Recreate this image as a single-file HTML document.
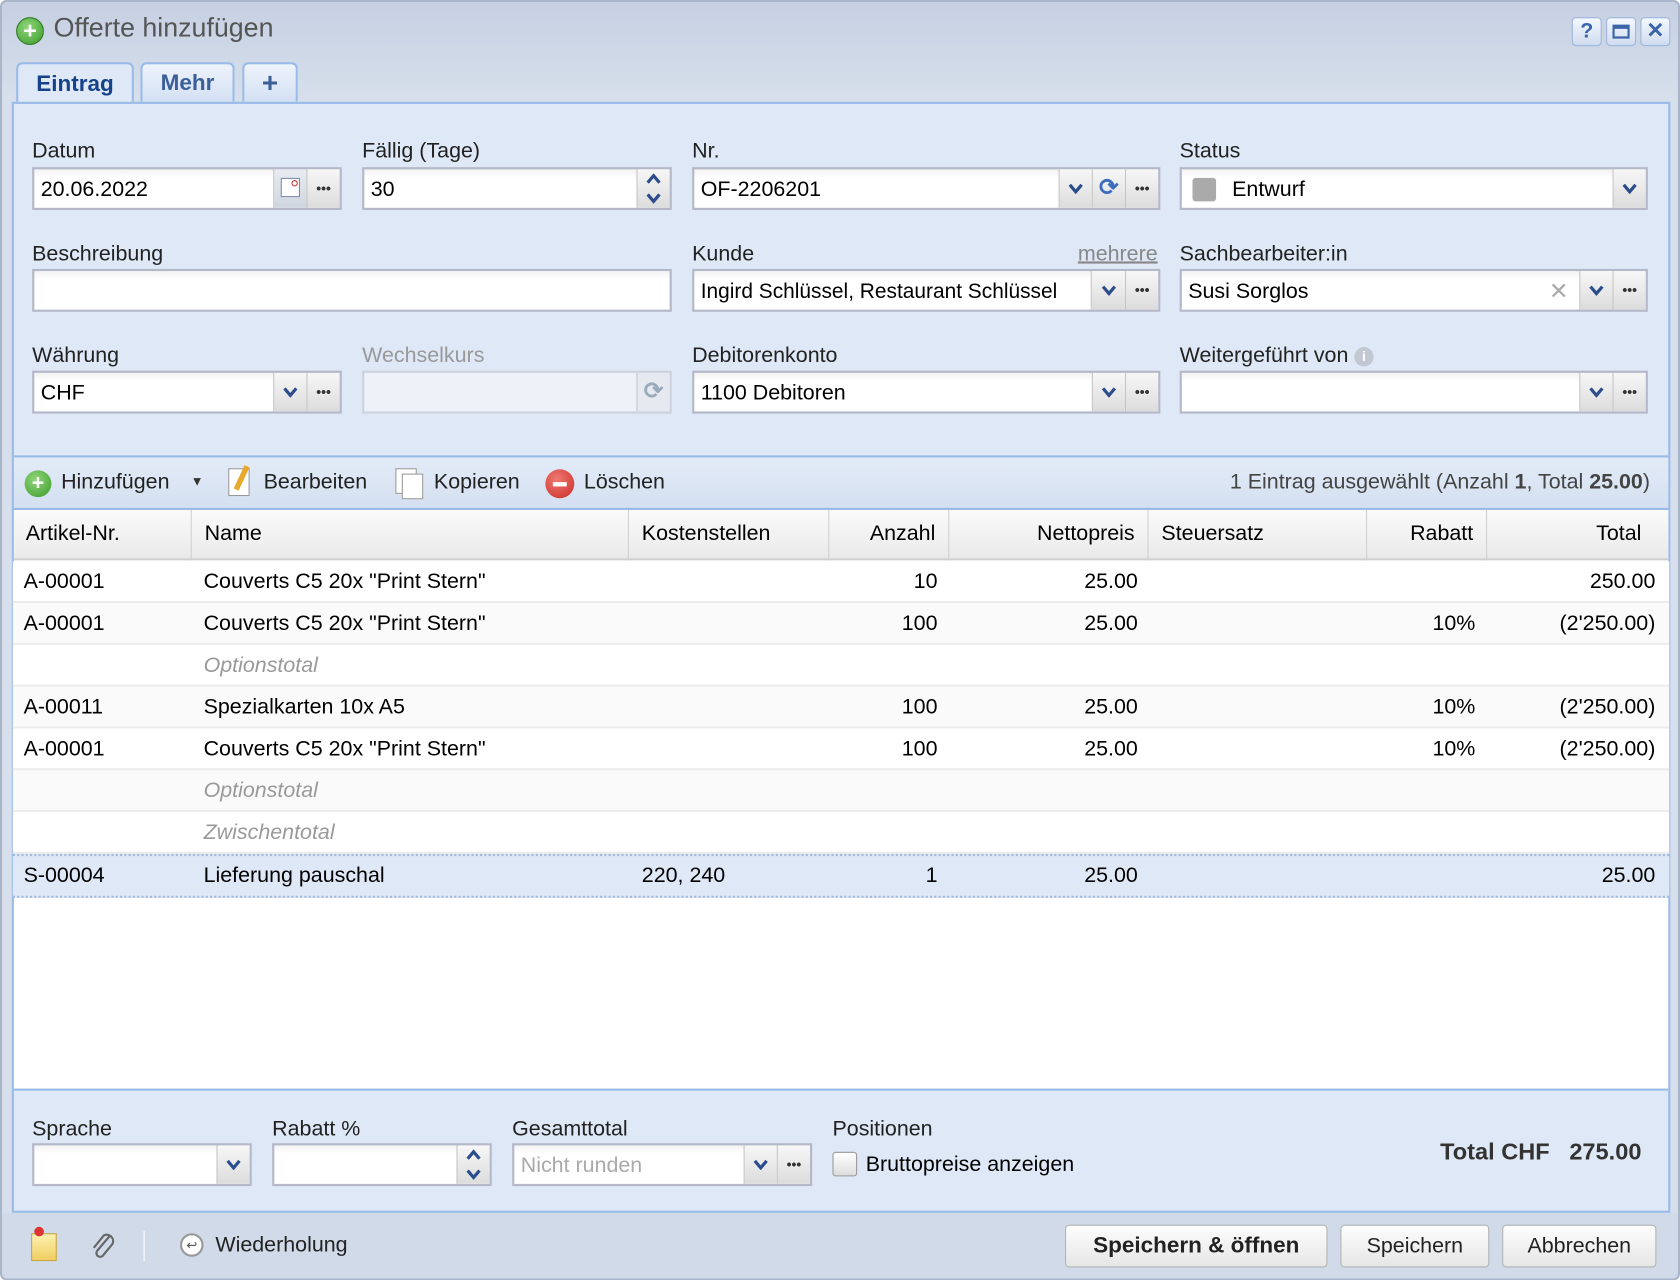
<!DOCTYPE html>
<html><head><meta charset="utf-8"><style>
*{box-sizing:border-box;margin:0;padding:0}
html,body{width:1680px;height:1280px;overflow:hidden;background:#fff}
#s{position:absolute;left:0;top:0;width:1568px;height:1195px;transform:scale(1.0714286);transform-origin:0 0;font-family:"Liberation Sans",sans-serif;font-size:20px;color:#000;background:linear-gradient(#c6d0e2,#d6dfeb 90px);border:2px solid #a9b5c8;border-radius:6px;overflow:hidden}
.a{position:absolute}
.lbl{position:absolute;color:#222;font-size:20px;line-height:24px}
.inp{position:absolute;height:40px;background:linear-gradient(#f2f2f2,#fff 8px);border:2px solid #b5b8c8;overflow:hidden}
.inp span{position:absolute;left:6px;top:7px;line-height:24px;white-space:nowrap}
.btn{position:absolute;top:0;bottom:0;width:31px;background:linear-gradient(#f7f7f7,#dcdcdc);border-left:1px solid #c4c4c4;text-align:center;font-size:13px;line-height:36px;color:#333;font-weight:bold}
.btn svg{display:block;margin:0 auto}
.row{position:absolute;left:10px;width:1546px;height:39px;border-bottom:2px solid #ececec;background:#fff}
.row.alt{background:#fafafa}
.c{position:absolute;top:7px;line-height:24px;white-space:nowrap}
.r{text-align:right}
.it{color:#999;font-style:italic}
.hd{position:absolute;top:475px;height:47px;border-right:1px solid #d0d0d0;line-height:44px;padding:0 12px}
.fb{position:absolute;top:1142px;height:40px;border:1px solid #b4b4b4;border-radius:4px;background:linear-gradient(#fdfdfd,#e6e6e6);text-align:center;line-height:38px;color:#222}
.tb{position:absolute;top:14px;width:28px;height:27px;border:1px solid #9fb6dc;border-radius:4px;background:linear-gradient(#f4f8ff,#d0dcf0);color:#3a64a8;font-weight:bold;text-align:center;line-height:25px;font-size:20px}
</style></head><body><div id="s">
<svg width="0" height="0" style="position:absolute"><defs>
<symbol id="dn" viewBox="0 0 14 10"><path d="M1.5 1.5 L7 8 L12.5 1.5" stroke="#2b4d8c" stroke-width="3" fill="none"/></symbol>
<symbol id="up" viewBox="0 0 14 10"><path d="M1.5 8.5 L7 2 L12.5 8.5" stroke="#2b4d8c" stroke-width="3" fill="none"/></symbol>
</defs></svg>
<!-- title -->
<div class="a" style="left:13px;top:14px;width:26px;height:26px;border-radius:50%;background:radial-gradient(circle at 40% 35%,#8fd67a,#3c9a2a);border:1px solid #2f7d22;color:#fff;font-weight:bold;text-align:center;line-height:24px;font-size:22px">+</div>
<div class="a" style="left:48px;top:9px;font-size:25px;color:#555;line-height:30px">Offerte hinzufügen</div>
<div class="tb" style="left:1465px">?</div>
<div class="tb" style="left:1497px"><div style="margin:6px auto;width:16px;height:13px;border:2px solid #3a64a8;border-top-width:4px"></div></div>
<div class="tb" style="left:1529px">✕</div>
<!-- tabs -->
<div class="a" style="left:13px;top:56px;width:110px;height:40px;border:2px solid #99bbe8;border-bottom:none;border-radius:6px 6px 0 0;background:#dfe8f6;text-align:center;line-height:38px;font-weight:bold;color:#15428b;font-size:21px">Eintrag</div>
<div class="a" style="left:129px;top:56px;width:88px;height:37px;border:2px solid #99bbe8;border-bottom:none;border-radius:6px 6px 0 0;background:linear-gradient(#eef3fb,#d3e0f3);text-align:center;line-height:36px;font-weight:bold;color:#3a5f99;font-size:21px">Mehr</div>
<div class="a" style="left:224px;top:56px;width:52px;height:37px;border:2px solid #99bbe8;border-bottom:none;border-radius:6px 6px 0 0;background:linear-gradient(#eef3fb,#d3e0f3);text-align:center;line-height:34px;font-weight:bold;color:#3a5f99;font-size:26px">+</div>
<!-- panel -->
<div class="a" style="left:9px;top:93px;width:1548px;height:1037px;border:2px solid #99bbe8;background:#dfe8f6"></div>
<!-- row1 -->
<div class="lbl" style="left:28px;top:127px">Datum</div>
<div class="inp" style="left:28px;top:154px;width:289px"><span>20.06.2022</span><div class="btn" style="right:31px;background:linear-gradient(#e8ecf2,#cfd6e0)"><div style="margin:8px auto;width:18px;height:18px;border:1px solid #7a8aa6;background:#fff;position:relative"><div style="position:absolute;right:1px;top:1px;width:6px;height:6px;border-radius:50%;border:1px solid #c33"></div></div></div><div class="btn" style="right:0">•••</div></div>
<div class="lbl" style="left:336px;top:127px">Fällig (Tage)</div>
<div class="inp" style="left:336px;top:154px;width:289px"><span>30</span><div class="btn" style="right:0;padding-top:4px"><svg width="14" height="10"><use href="#up"/></svg><div style="height:8px"></div><svg width="14" height="10"><use href="#dn"/></svg></div></div>
<div class="lbl" style="left:644px;top:127px">Nr.</div>
<div class="inp" style="left:644px;top:154px;width:437px"><span>OF-2206201</span><div class="btn" style="right:62px;padding-top:13px"><svg width="14" height="10"><use href="#dn"/></svg></div><div class="btn" style="right:31px;color:#3a6cc0;font-size:22px;line-height:34px">⟳</div><div class="btn" style="right:0">•••</div></div>
<div class="lbl" style="left:1099px;top:127px">Status</div>
<div class="inp" style="left:1099px;top:154px;width:437px"><div class="a" style="left:10px;top:8px;width:22px;height:22px;background:#aaa;border-radius:3px"></div><span style="left:47px">Entwurf</span><div class="btn" style="right:0;padding-top:13px"><svg width="14" height="10"><use href="#dn"/></svg></div></div>
<!-- row2 -->
<div class="lbl" style="left:28px;top:223px">Beschreibung</div>
<div class="inp" style="left:28px;top:249px;width:597px"></div>
<div class="lbl" style="left:644px;top:223px">Kunde</div>
<div class="lbl" style="left:1004px;top:223px;color:#888;text-decoration:underline">mehrere</div>
<div class="inp" style="left:644px;top:249px;width:437px"><div class="a" style="left:0;top:0;width:370px;height:36px;overflow:hidden"><span style="font-size:19.5px">Ingird Schlüssel, Restaurant Schlüssel</span></div><div class="btn" style="right:31px;width:32px;padding-top:13px"><svg width="14" height="10"><use href="#dn"/></svg></div><div class="btn" style="right:0">•••</div></div>
<div class="lbl" style="left:1099px;top:223px">Sachbearbeiter:in</div>
<div class="inp" style="left:1099px;top:249px;width:437px"><span>Susi Sorglos</span><div class="a" style="right:72px;top:6px;color:#aaa;font-size:22px">✕</div><div class="btn" style="right:31px;padding-top:13px"><svg width="14" height="10"><use href="#dn"/></svg></div><div class="btn" style="right:0">•••</div></div>
<!-- row3 -->
<div class="lbl" style="left:28px;top:318px">Währung</div>
<div class="inp" style="left:28px;top:344px;width:289px"><span>CHF</span><div class="btn" style="right:31px;padding-top:13px"><svg width="14" height="10"><use href="#dn"/></svg></div><div class="btn" style="right:0">•••</div></div>
<div class="lbl" style="left:336px;top:318px;color:#999">Wechselkurs</div>
<div class="inp" style="left:336px;top:344px;width:289px;background:#eef1f7;border-color:#ccd2de"><div class="btn" style="right:0;color:#9ab;font-size:22px;line-height:34px;background:#e6eaf0">⟳</div></div>
<div class="lbl" style="left:644px;top:318px">Debitorenkonto</div>
<div class="inp" style="left:644px;top:344px;width:437px"><span>1100 Debitoren</span><div class="btn" style="right:31px;padding-top:13px"><svg width="14" height="10"><use href="#dn"/></svg></div><div class="btn" style="right:0">•••</div></div>
<div class="lbl" style="left:1099px;top:318px">Weitergeführt von <span style="display:inline-block;width:18px;height:18px;border-radius:50%;background:#c2c8d2;color:#fff;font-size:13px;text-align:center;line-height:18px;font-weight:bold;vertical-align:1px">i</span></div>
<div class="inp" style="left:1099px;top:344px;width:437px"><div class="btn" style="right:31px;padding-top:13px"><svg width="14" height="10"><use href="#dn"/></svg></div><div class="btn" style="right:0">•••</div></div>
<!-- toolbar -->
<div class="a" style="left:11px;top:423px;width:1544px;height:51px;border-top:2px solid #99bbe8;border-bottom:2px solid #99bbe8;background:linear-gradient(#e3ebf7,#d4e0f1)"></div>
<div class="a" style="left:21px;top:437px;width:25px;height:25px;border-radius:50%;background:radial-gradient(circle at 40% 35%,#8fd67a,#3c9a2a);color:#fff;font-weight:bold;text-align:center;line-height:24px;font-size:20px">+</div>
<div class="a" style="left:55px;top:437px;color:#222">Hinzufügen</div>
<div class="a" style="left:176px;top:440px;font-size:12px;color:#333">▼</div>
<div class="a" style="left:211px;top:435px;width:20px;height:26px;border:1px solid #999;background:#fff"><div style="position:absolute;left:9px;top:-4px;width:5px;height:24px;background:#e8a82c;transform:rotate(25deg)"></div></div>
<div class="a" style="left:244px;top:437px;color:#222">Bearbeiten</div>
<div class="a" style="left:367px;top:435px;width:20px;height:24px;border:1px solid #999;background:#fff"></div><div class="a" style="left:373px;top:440px;width:20px;height:24px;border:1px solid #999;background:#fff"></div>
<div class="a" style="left:403px;top:437px;color:#222">Kopieren</div>
<div class="a" style="left:507px;top:436px;width:27px;height:27px;border-radius:50%;background:radial-gradient(circle at 40% 35%,#f07a72,#c82c26)"><div style="margin:12px auto 0;width:13px;height:4px;background:#fff"></div></div>
<div class="a" style="left:543px;top:437px;color:#222">Löschen</div>
<div class="a" style="right:26px;top:437px;color:#444">1 Eintrag ausgewählt (Anzahl <b>1</b>, Total <b>25.00</b>)</div>
<!-- grid -->
<div class="a" style="left:11px;top:474px;width:1544px;height:542px;background:#fff"></div>
<div class="a" style="left:11px;top:474px;width:1544px;height:47px;background:linear-gradient(#fafafa,#eaeaea);border-bottom:2px solid #d0d0d0"></div>
<div class="hd" style="left:10px;width:167px;top:474px">Artikel-Nr.</div>
<div class="hd" style="left:177px;width:408px;top:474px">Name</div>
<div class="hd" style="left:585px;width:187px;top:474px">Kostenstellen</div>
<div class="hd r" style="left:772px;width:112px;top:474px">Anzahl</div>
<div class="hd r" style="left:884px;width:186px;top:474px">Nettopreis</div>
<div class="hd" style="left:1070px;width:204px;top:474px">Steuersatz</div>
<div class="hd r" style="left:1274px;width:112px;top:474px">Rabatt</div>
<div class="hd r" style="left:1386px;width:168px;border-right:none;padding-right:24px;top:474px">Total</div>

<div class="row" style="top:522px"><div class="c" style="left:10px">A-00001</div><div class="c" style="left:178px">Couverts C5 20x "Print Stern"</div><div class="c" style="right:683px">10</div><div class="c" style="right:496px">25.00</div><div class="c" style="right:13px">250.00</div></div>
<div class="row alt" style="top:561px"><div class="c" style="left:10px">A-00001</div><div class="c" style="left:178px">Couverts C5 20x "Print Stern"</div><div class="c" style="right:683px">100</div><div class="c" style="right:496px">25.00</div><div class="c" style="right:181px">10%</div><div class="c" style="right:13px">(2'250.00)</div></div>
<div class="row" style="top:600px"><div class="c it" style="left:178px">Optionstotal</div></div>
<div class="row alt" style="top:639px"><div class="c" style="left:10px">A-00011</div><div class="c" style="left:178px">Spezialkarten 10x A5</div><div class="c" style="right:683px">100</div><div class="c" style="right:496px">25.00</div><div class="c" style="right:181px">10%</div><div class="c" style="right:13px">(2'250.00)</div></div>
<div class="row" style="top:678px"><div class="c" style="left:10px">A-00001</div><div class="c" style="left:178px">Couverts C5 20x "Print Stern"</div><div class="c" style="right:683px">100</div><div class="c" style="right:496px">25.00</div><div class="c" style="right:181px">10%</div><div class="c" style="right:13px">(2'250.00)</div></div>
<div class="row alt" style="top:717px"><div class="c it" style="left:178px">Optionstotal</div></div>
<div class="row" style="top:756px"><div class="c it" style="left:178px">Zwischentotal</div></div>
<div class="row" style="top:795px;height:41px;background:#dfe8f6;border-top:2px dotted #a3bae0;border-bottom:2px dotted #a3bae0"><div class="c" style="left:10px;top:6px">S-00004</div><div class="c" style="left:178px;top:6px">Lieferung pauschal</div><div class="c" style="left:587px;top:6px">220, 240</div><div class="c" style="right:683px;top:6px">1</div><div class="c" style="right:496px;top:6px">25.00</div><div class="c" style="right:13px;top:6px">25.00</div></div>
<!-- bottom form -->
<div class="a" style="left:11px;top:1014px;width:1544px;height:2px;background:#99bbe8"></div>
<div class="lbl" style="left:28px;top:1040px">Sprache</div>
<div class="inp" style="left:28px;top:1065px;width:205px"><div class="btn" style="right:0;padding-top:13px"><svg width="14" height="10"><use href="#dn"/></svg></div></div>
<div class="lbl" style="left:252px;top:1040px">Rabatt %</div>
<div class="inp" style="left:252px;top:1065px;width:205px"><div class="btn" style="right:0;padding-top:4px"><svg width="14" height="10"><use href="#up"/></svg><div style="height:8px"></div><svg width="14" height="10"><use href="#dn"/></svg></div></div>
<div class="lbl" style="left:476px;top:1040px">Gesamttotal</div>
<div class="inp" style="left:476px;top:1065px;width:280px"><span style="color:#aaa">Nicht runden</span><div class="btn" style="right:31px;padding-top:13px"><svg width="14" height="10"><use href="#dn"/></svg></div><div class="btn" style="right:0">•••</div></div>
<div class="lbl" style="left:775px;top:1040px">Positionen</div>
<div class="a" style="left:775px;top:1073px;width:23px;height:23px;border:1px solid #999;border-radius:3px;background:linear-gradient(#fff,#ddd)"></div>
<div class="a" style="left:806px;top:1074px">Bruttopreise anzeigen</div>
<div class="a" style="right:34px;top:1060px;font-weight:bold;font-size:22px;color:#333">Total CHF&nbsp;&nbsp;&nbsp;275.00</div>
<!-- footer -->
<div class="a" style="left:0;top:1130px;width:1568px;height:65px;background:#d0dae8"></div>
<div class="a" style="left:27px;top:1149px;width:24px;height:26px;background:linear-gradient(#fdf0b0,#f0cf60);border:1px solid #c9a640"></div>
<div class="a" style="left:30px;top:1143px;width:9px;height:9px;border-radius:50%;background:#d33"></div>
<svg class="a" style="left:82px;top:1146px" width="26" height="30" viewBox="0 0 26 30"><path d="M18 6 L7 19 a3.5 3.5 0 0 0 5 5 L21 13 a6 6 0 0 0 -8 -8 L4 16" stroke="#666" stroke-width="2" fill="none" stroke-linecap="round"/></svg>
<div class="a" style="left:132px;top:1147px;width:1px;height:28px;background:#fff"></div>
<div class="a" style="left:166px;top:1149px;width:22px;height:22px;border-radius:50%;border:2px solid #999;background:#fff;font-size:12px;text-align:center;line-height:18px;color:#555">↩</div>
<div class="a" style="left:199px;top:1149px;color:#222">Wiederholung</div>
<div class="fb" style="left:992px;top:1141px;width:245px;font-weight:bold;font-size:21px">Speichern &amp; öffnen</div>
<div class="fb" style="left:1249px;top:1141px;width:139px">Speichern</div>
<div class="fb" style="left:1400px;top:1141px;width:144px">Abbrechen</div>
</div></body></html>
